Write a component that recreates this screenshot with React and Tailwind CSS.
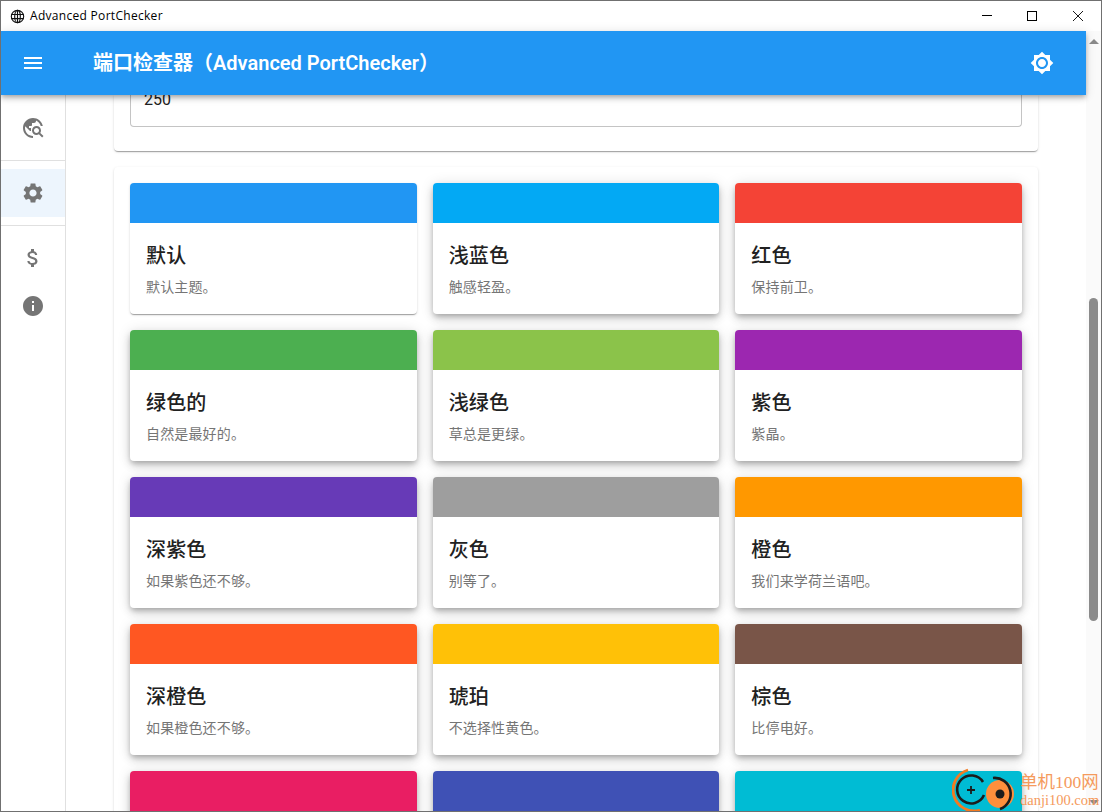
import React from "react";

const themes = [
  { color: "bg-[#2196f3]", title: "默认", desc: "默认主题。" },
  { color: "bg-[#03a9f4]", title: "浅蓝色", desc: "触感轻盈。" },
  { color: "bg-[#f44336]", title: "红色", desc: "保持前卫。" },
  { color: "bg-[#4caf50]", title: "绿色的", desc: "自然是最好的。" },
  { color: "bg-[#8bc34a]", title: "浅绿色", desc: "草总是更绿。" },
  { color: "bg-[#9c27b0]", title: "紫色", desc: "紫晶。" },
  { color: "bg-[#673ab7]", title: "深紫色", desc: "如果紫色还不够。" },
  { color: "bg-[#9e9e9e]", title: "灰色", desc: "别等了。" },
  { color: "bg-[#ff9800]", title: "橙色", desc: "我们来学荷兰语吧。" },
  { color: "bg-[#ff5722]", title: "深橙色", desc: "如果橙色还不够。" },
  { color: "bg-[#ffc107]", title: "琥珀", desc: "不选择性黄色。" },
  { color: "bg-[#795548]", title: "棕色", desc: "比停电好。" },
  { color: "bg-[#e91e63]" },
  { color: "bg-[#3f51b5]" },
  { color: "bg-[#00bcd4]" },
];

const icons = {
  explore:
    "M19.3 16.9c.4-.7.7-1.5.7-2.4 0-2.5-2-4.5-4.5-4.5S11 12 11 14.5s2 4.5 4.5 4.5c.9 0 1.7-.3 2.4-.7l3.2 3.2 1.4-1.4-3.2-3.2zm-3.8.1c-1.4 0-2.5-1.1-2.5-2.5s1.1-2.5 2.5-2.5 2.5 1.1 2.5 2.5-1.1 2.5-2.5 2.5zM12 20v2C6.48 22 2 17.52 2 12S6.48 2 12 2c4.84 0 8.87 3.44 9.8 8h-2.07c-.64-2.46-2.4-4.47-4.73-5.41V5c0 1.1-.9 2-2 2h-2v2c0 .55-.45 1-1 1H8v2h2v3H9l-4.79-4.79C4.08 10.79 4 11.38 4 12c0 4.41 3.59 8 8 8z",
  settings:
    "M19.14 12.94c.04-.3.06-.61.06-.94 0-.32-.02-.64-.07-.94l2.03-1.58c.18-.14.23-.41.12-.61l-1.92-3.32c-.12-.22-.37-.29-.59-.22l-2.39.96c-.5-.38-1.03-.7-1.62-.94l-.36-2.54c-.04-.24-.24-.41-.48-.41h-3.84c-.24 0-.43.17-.47.41l-.36 2.54c-.59.24-1.13.57-1.62.94l-2.39-.96c-.22-.08-.47 0-.59.22L2.74 8.87c-.12.21-.08.47.12.61l2.03 1.58c-.05.3-.09.63-.09.94s.02.64.07.94l-2.03 1.58c-.18.14-.23.41-.12.61l1.92 3.32c.12.22.37.29.59.22l2.39-.96c.5.38 1.03.7 1.62.94l.36 2.54c.05.24.24.41.48.41h3.84c.24 0 .44-.17.47-.41l.36-2.54c.59-.24 1.13-.56 1.62-.94l2.39.96c.22.08.47 0 .59-.22l1.92-3.32c.12-.22.07-.47-.12-.61l-2.01-1.58zM12 15.6c-1.98 0-3.6-1.62-3.6-3.6s1.62-3.6 3.6-3.6 3.6 1.62 3.6 3.6-1.62 3.6-3.6 3.6z",
  money:
    "M11.8 10.9c-2.27-.59-3-1.2-3-2.15 0-1.09 1.01-1.85 2.7-1.85 1.78 0 2.44.85 2.5 2.1h2.21c-.07-1.72-1.12-3.3-3.21-3.81V3h-3v2.16c-1.94.42-3.5 1.68-3.5 3.61 0 2.31 1.91 3.46 4.7 4.13 2.5.6 3 1.48 3 2.41 0 .69-.49 1.79-2.7 1.79-2.06 0-2.87-.92-2.98-2.1h-2.2c.12 2.19 1.76 3.42 3.68 3.83V21h3v-2.15c1.95-.37 3.5-1.5 3.5-3.55 0-2.84-2.43-3.81-4.7-4.4z",
  info: "M12 2C6.48 2 2 6.48 2 12s4.48 10 10 10 10-4.48 10-10S17.52 2 12 2zm1 15h-2v-6h2v6zm0-8h-2V7h2v2z",
  brightness:
    "M20 8.69V4h-4.69L12 .69 8.69 4H4v4.69L.69 12 4 15.31V20h4.69L12 23.31 15.31 20H20v-4.69L23.31 12 20 8.69zM12 18c-3.31 0-6-2.69-6-6s2.69-6 6-6 6 2.69 6 6-2.69 6-6 6zm0-10c-2.21 0-4 1.79-4 4s1.79 4 4 4 4-1.79 4-4-1.79-4-4-4z",
  menu: "M3 18h18v-2H3v2zm0-5h18v-2H3v2zm0-7v2h18V6H3z",
};

function Icon({ name, className = "" }) {
  return (
    <svg viewBox="0 0 24 24" className={`w-6 h-6 fill-current ${className}`}>
      <path d={icons[name]} />
    </svg>
  );
}

function NavItem({ name, selected = false }) {
  return (
    <div
      className={`h-12 flex items-center justify-center text-[#757575] ${
        selected ? "bg-[#edf5fd]" : ""
      }`}
    >
      <Icon name={name} />
    </div>
  );
}

function ThemeCard({ theme, first }) {
  return (
    <div
      className={`bg-white rounded overflow-hidden h-[131px] ${
        first
          ? "shadow-[0_2px_1px_-1px_rgba(0,0,0,0.2),0_1px_1px_0_rgba(0,0,0,0.14),0_1px_3px_0_rgba(0,0,0,0.12)]"
          : "shadow-[0_3px_5px_-1px_rgba(0,0,0,0.2),0_5px_8px_0_rgba(0,0,0,0.14),0_1px_14px_0_rgba(0,0,0,0.12)]"
      }`}
    >
      <div className={`h-10 ${theme.color}`} />
      {theme.title && (
        <div className="pt-[17px] px-4">
          <div className="text-[20px] leading-8 tracking-[0.15px] font-medium text-[#212121] mb-[5px]">
            {theme.title}
          </div>
          <div className="text-sm leading-5 tracking-[0.15px] text-[#757575]">{theme.desc}</div>
        </div>
      )}
    </div>
  );
}

function Watermark() {
  return (
    <div className="absolute right-0 bottom-0 w-[149px] h-[44px] flex items-center pointer-events-none">
      <svg viewBox="0 0 66 44" className="w-[66px] h-[44px] shrink-0">
        <path d="M16 3 A20 20 0 0 0 28 43" fill="none" stroke="#f47a20" strokeWidth="2.8" />
        <path d="M31 15 A14 14 0 1 0 32 28" fill="none" stroke="#1c1c1c" strokeWidth="2.6" />
        <path d="M15 23h8M19 19v8" stroke="#1c1c1c" strokeWidth="1.8" />
        <circle cx="48" cy="27" r="14" fill="#ff8f3c" />
        <path d="M41 11 A16 16 0 0 1 48 42" fill="none" stroke="#1c1c1c" strokeWidth="2.6" />
        <circle cx="48" cy="27" r="4.5" fill="#1c1c1c" />
      </svg>
      <div className="ml-[2px] font-['Liberation_Serif','Noto_Sans_CJK_SC',serif] text-[#f59a5c]">
        <div className="text-[17.5px] leading-[22px] whitespace-nowrap">单机100网</div>
        <div className="text-[14.5px] leading-[14px] whitespace-nowrap">danji100.com</div>
      </div>
    </div>
  );
}

export default function App() {
  return (
    <div className="relative w-[1102px] h-[812px] overflow-hidden flex flex-col bg-white border border-[#707070] font-['Roboto','Noto_Sans_CJK_SC',sans-serif]">
      {/* title bar */}
      <div className="h-[30px] shrink-0 flex items-center bg-white text-black">
        <svg viewBox="0 0 16 16" className="w-[15px] h-[15px] ml-[9px] fill-none stroke-[#111] stroke-[1.2]">
          <circle cx="8" cy="8" r="6.6" />
          <ellipse cx="8" cy="8" rx="3" ry="6.6" />
          <path d="M8 1.4v13.2M1.4 5.8h13.2M1.4 10.2h13.2" />
        </svg>
        <span className="ml-[5px] text-[12px] tracking-[0.3px] font-['Open_Sans',sans-serif]">
          Advanced PortChecker
        </span>
        <div className="ml-auto flex items-center mr-[18px] mb-px gap-[35px]">
          <div className="w-[10px] h-px bg-black" />
          <div className="w-[10px] h-[10px] border border-black" />
          <svg viewBox="0 0 10 10" className="ml-px w-[10px] h-[10px] stroke-black stroke-[0.9]">
            <path d="M0 0l10 10M10 0L0 10" />
          </svg>
        </div>
      </div>

      <div className="flex-1 flex min-h-0">
        <div className="flex-1 flex flex-col min-w-0">
          {/* app bar */}
          <header className="relative z-10 h-16 shrink-0 flex items-center bg-[#2196f3] text-white shadow-[0_2px_4px_-1px_rgba(0,0,0,0.2),0_4px_5px_0_rgba(0,0,0,0.14),0_1px_10px_0_rgba(0,0,0,0.12)]">
            <Icon name="menu" className="ml-5" />
            <h1 className="ml-[48px] text-[20px] font-semibold">
              端口检查器（Advanced PortChecker）
            </h1>
            <Icon name="brightness" className="ml-auto mr-8" />
          </header>

          <div className="flex-1 flex min-h-0">
            {/* side nav */}
            <nav className="w-[65px] shrink-0 border-r border-[#e0e0e0]">
              <div className="py-2 mt-px">
                <NavItem name="explore" />
              </div>
              <div className="border-t border-[#e0e0e0] py-2">
                <NavItem name="settings" selected />
              </div>
              <div className="border-t border-[#e0e0e0] py-2">
                <NavItem name="money" />
                <NavItem name="info" />
              </div>
            </nav>

            {/* page content */}
            <main className="flex-1 min-w-0 overflow-hidden px-12">
              <div className="bg-white rounded-b px-4 pb-6 shadow-[0_2px_1px_-1px_rgba(0,0,0,0.2),0_1px_1px_0_rgba(0,0,0,0.14),0_1px_3px_0_rgba(0,0,0,0.12)]">
                <div className="h-8 flex items-end pb-[14px] px-[13px] border border-t-0 border-[#c4c4c4] rounded-b text-base leading-6 text-[#212121]">
                  250
                </div>
              </div>
              <div className="mt-4 bg-white rounded-t p-4 shadow-[0_2px_1px_-1px_rgba(0,0,0,0.2),0_1px_1px_0_rgba(0,0,0,0.14),0_1px_3px_0_rgba(0,0,0,0.12)]">
                <div className="grid grid-cols-3 gap-4">
                  {themes.map((t, i) => (
                    <ThemeCard key={t.color} theme={t} first={i === 0} />
                  ))}
                </div>
              </div>
            </main>
          </div>
        </div>

        {/* scrollbar */}
        <div className="w-[15px] shrink-0 flex flex-col items-center bg-[#fafafa]">
          <div className="mt-[8px] w-0 h-0 border-x-[5px] border-x-transparent border-b-[5px] border-b-[#8a8a8a]" />
          <div className="mt-[254px] w-[9px] h-[323px] rounded-full bg-[#8b8b8b]" />
          <div className="mt-auto mb-[6px] w-0 h-0 border-x-[5px] border-x-transparent border-t-[5px] border-t-[#8a8a8a]" />
        </div>
      </div>

      {/* desktop showing through the window edge */}
      <div className="absolute -left-px top-[183px] w-px h-[44px] bg-[#1d5a8c]" />
      <div className="absolute -right-px top-[183px] w-px h-[44px] bg-[#2a4a68]" />

      <Watermark />
    </div>
  );
}
